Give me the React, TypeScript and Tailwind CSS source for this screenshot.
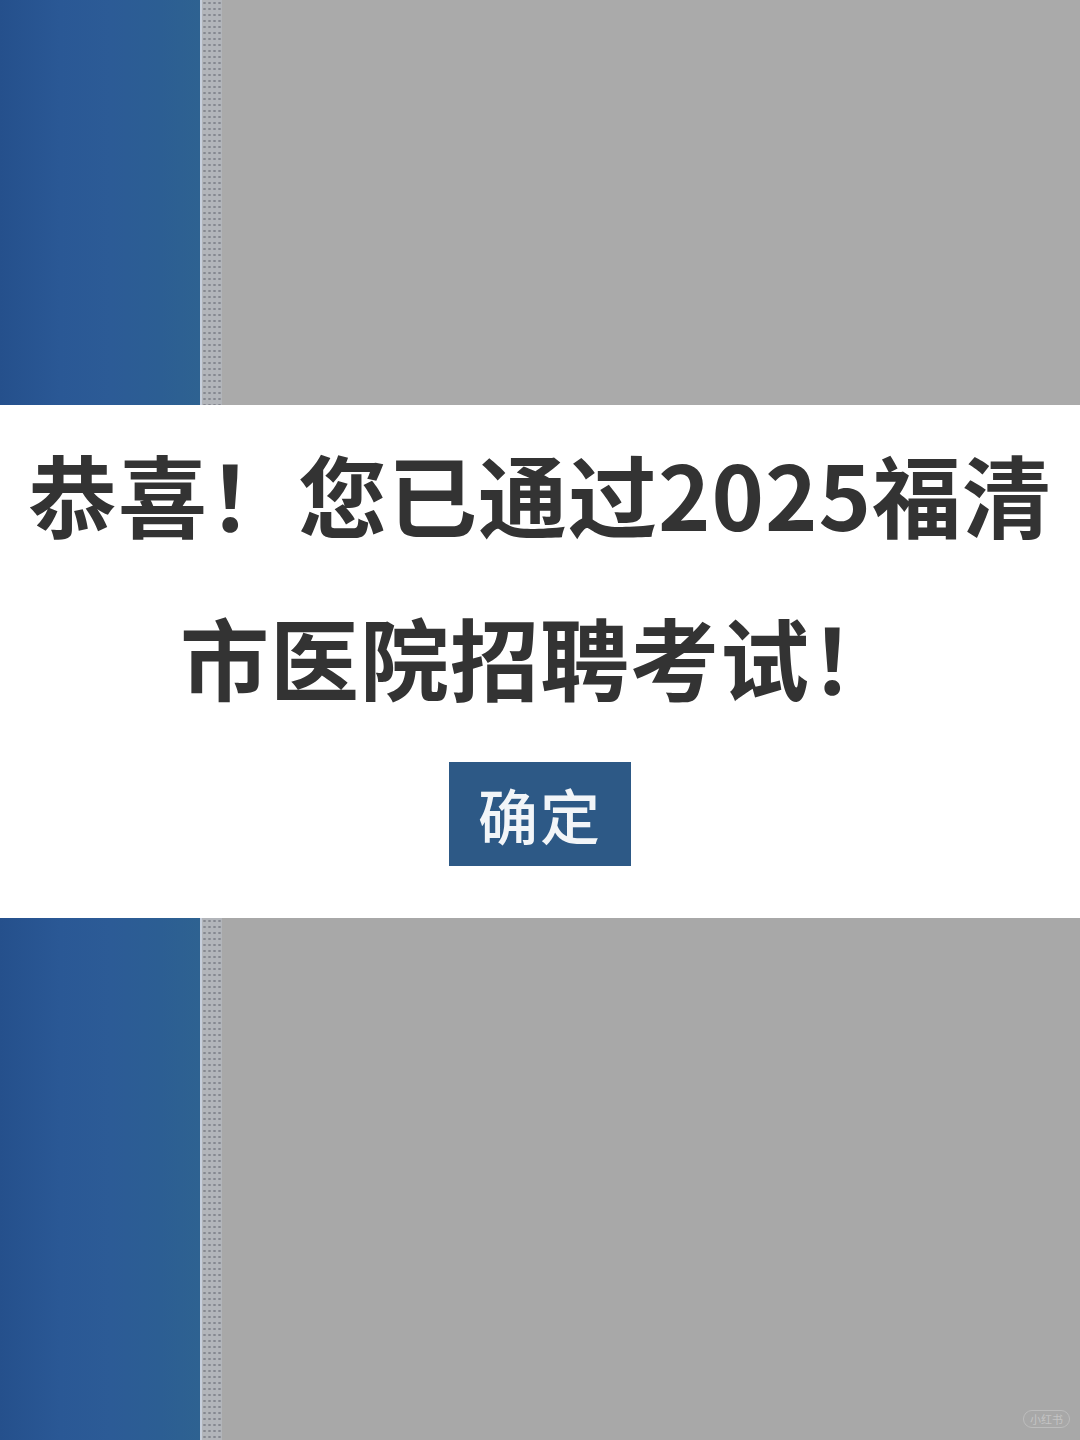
import React from "react";

const serif = "font-['Noto_Sans_CJK_SC','Liberation_Serif',sans-serif]";

function SideStrip() {
    return (
        <>
            {/* blue streaked column */}
            <div className="w-[200px] shrink-0 bg-[linear-gradient(to_right,#25508c_0%,#2a5895_30%,#2c5b96_55%,#2c5e93_80%,#2e6291_100%)]" />
            {/* dotted ruler */}
            <div className="w-[22px] shrink-0 bg-[#b2b5ba] bg-[radial-gradient(circle,#858890_1px,transparent_1.4px)] bg-[length:5px_6px] border-l-2 border-[#c6cedb]" />
        </>
    );
}

export default function App() {
    return (
        <div className="w-[1080px] h-[1440px] flex flex-col bg-[#a9a9a9] overflow-hidden">
            {/* top backdrop */}
            <div className="h-[405px] flex shrink-0">
                <SideStrip />
                <div className="flex-1 bg-[#aaaaaa]" />
            </div>

            {/* dialog band */}
            <div className="h-[513px] shrink-0 bg-white flex flex-col items-center pt-[6px]">
                <div className={`${serif} font-bold text-[#333333] text-[89px] leading-[163px] text-center tracking-[1px]`}>
                    <div className="whitespace-nowrap">恭喜！您已通过2025福清</div>
                    <div className="whitespace-nowrap">市医院招聘考试！</div>
                </div>
                <button className="mt-[25px] w-[182px] h-[104px] bg-[#2d5986] text-[#f2f5f8] text-[60px] font-['Noto_Sans_CJK_SC',sans-serif] font-medium flex items-center justify-center tracking-[2px]">
                    确定
                </button>
            </div>

            {/* bottom backdrop */}
            <div className="flex-1 flex relative">
                <SideStrip />
                <div className="flex-1 bg-[#a8a8a8]" />
                <div className="absolute right-[10px] bottom-[12px] px-[6px] h-[18px] rounded-full border border-[#bdbdbd] text-[11px] leading-[16px] text-[#c4c4c4] font-['Noto_Sans_CJK_SC',sans-serif]">
                    小红书
                </div>
            </div>
        </div>
    );
}
